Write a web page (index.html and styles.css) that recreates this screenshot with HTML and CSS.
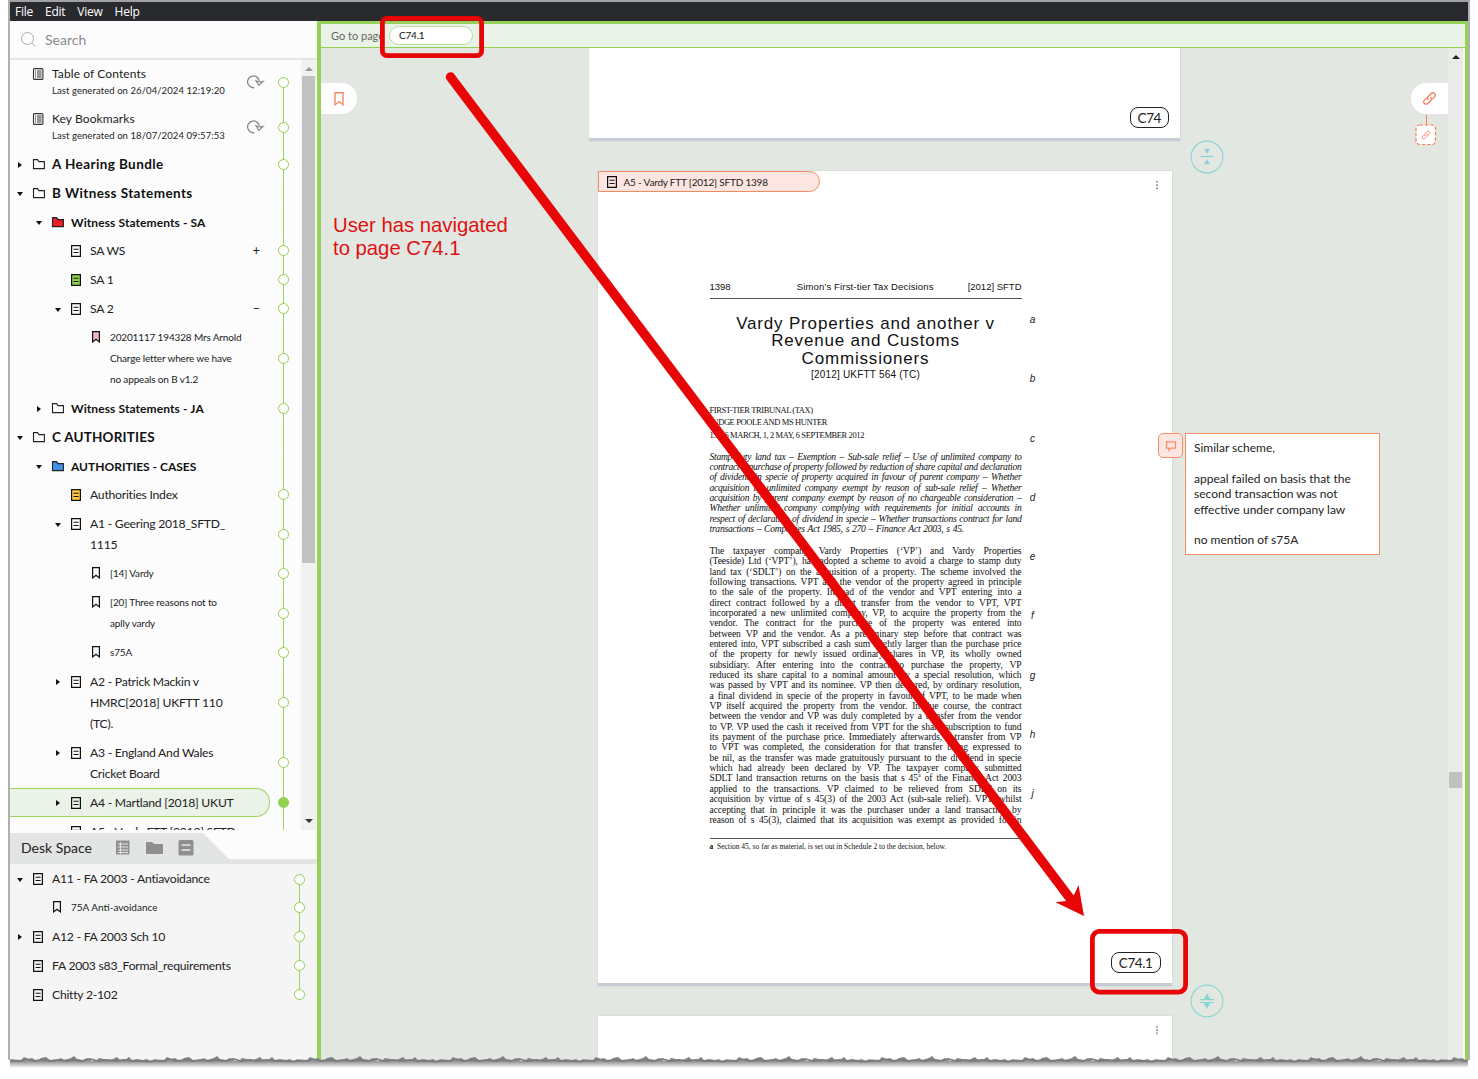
FILE: index.html
```html
<!DOCTYPE html>
<html lang="en">
<head>
  <meta charset="UTF-8">
  <meta name="viewport" content="width=device-width, initial-scale=1.0">
  <title>Hearing Bundle</title>
  <link rel="stylesheet" href="styles.css">
</head>
<body>
  <!-- Icon set -->
  <svg class="defs" width="0" height="0">
    <symbol id="doc" viewBox="0 0 12 14"><path d="M1.6 1.6h8.8v10.8H1.6z" fill="var(--fill, none)" stroke="#111" stroke-width="1.2"/><path d="M3.6 5.2h5M3.6 8.5h5" stroke="#111" stroke-width="1.1"/></symbol>
    <symbol id="list" viewBox="0 0 12 14"><rect x="1.5" y="1.6" width="9.4" height="10.8" rx="1" fill="none" stroke="#333" stroke-width="1.1"/><path d="M3 4h1M3 6h1M3 8h1M3 10h1M5 4h4.6M5 6h4.6M5 8h4.6M5 10h4.6" stroke="#333"/></symbol>
    <symbol id="folder" viewBox="0 0 14 12"><path d="M1.5 1.6h4l1.5 2h5.4v7H1.5z" fill="var(--fill, none)" stroke="var(--line, #222)" stroke-width="1.1"/></symbol>
    <symbol id="mark" viewBox="0 0 10 12"><path d="M1.6.7h6.8v10.2L5 8.2l-3.400 2.7z" fill="var(--fill, none)" stroke="var(--line, #111)" stroke-width="1.2"/></symbol>
    <symbol id="refresh" viewBox="0 0 20 16"><path d="M9.3 13.7A5.9 5.9 0 1 1 14.3 7" fill="none" stroke="#888" stroke-width="1.3"/><path d="M11 6.8l3 1.2 4.2-.7-4.3 4.2z" fill="none" stroke="#888" stroke-width="1.1"/></symbol>
    <symbol id="link" viewBox="0 0 16 16"><g fill="none" stroke="#f58060" stroke-width="1.4" stroke-linecap="round"><path d="M6.4 9.3a2.6 2.6 0 0 1 .2-3.4l3.2-3.2a2.5 2.5 0 0 1 3.6 3.6l-2 2"/><path d="M9.6 6.7a2.6 2.6 0 0 1-.2 3.4l-3.2 3.2a2.5 2.5 0 0 1-3.6-3.6l2-2"/></g></symbol>
    <symbol id="dots" viewBox="0 0 4 10"><path d="M1 1h2v1.6H1zM1 4.3h2v1.6H1zM1 7.6h2v1.6H1z" fill="#999"/></symbol>
  </svg>

  <div class="window">
    <div class="menubar">
      <span>File</span><span>Edit</span><span>View</span><span>Help</span>
    </div>

    <div class="main">
      <div class="sidebar">
        <div class="search">
          <svg width="18" height="18" viewBox="0 0 18 18"><circle cx="7.5" cy="7.5" r="6" fill="none" stroke="#aaa"/><path d="M12 12l3.5 3.5" stroke="#aaa"/></svg>
          <span>Search</span>
        </div>

        <div class="tree-wrap">
          <div class="tree">
            <div class="row report first">
              <div class="label"><i class="arrow"></i><svg class="icon"><use href="#list"/></svg><div class="text">Table of Contents<small>Last generated on 26/04/2024 12:19:20</small></div></div>
              <svg class="refresh"><use href="#refresh"/></svg>
              <div class="rail"><b class="dot"></b></div>
            </div>
            <div class="row report">
              <div class="label"><i class="arrow"></i><svg class="icon"><use href="#list"/></svg><div class="text">Key Bookmarks<small>Last generated on 18/07/2024 09:57:53</small></div></div>
              <svg class="refresh"><use href="#refresh"/></svg>
              <div class="rail"><b class="dot"></b></div>
            </div>
            <div class="row top">
              <div class="label"><i class="arrow right"></i><svg class="icon folder"><use href="#folder"/></svg><div class="text">A Hearing Bundle</div></div>
              <div class="rail"><b class="dot"></b></div>
            </div>
            <div class="row top">
              <div class="label"><i class="arrow down"></i><svg class="icon folder"><use href="#folder"/></svg><div class="text">B Witness Statements</div></div>
              <div class="rail"></div>
            </div>
            <div class="row sub">
              <div class="label"><i class="arrow down"></i><svg class="icon folder red"><use href="#folder"/></svg><div class="text">Witness Statements - SA</div></div>
              <div class="rail"></div>
            </div>
            <div class="row file">
              <div class="label"><i class="arrow"></i><svg class="icon"><use href="#doc"/></svg><div class="text">SA WS</div><span class="sign">+</span></div>
              <div class="rail"><b class="dot"></b></div>
            </div>
            <div class="row file">
              <div class="label"><i class="arrow"></i><svg class="icon green"><use href="#doc"/></svg><div class="text">SA 1</div></div>
              <div class="rail"><b class="dot"></b></div>
            </div>
            <div class="row file">
              <div class="label"><i class="arrow down"></i><svg class="icon"><use href="#doc"/></svg><div class="text">SA 2</div><span class="sign">–</span></div>
              <div class="rail"><b class="dot"></b></div>
            </div>
            <div class="row mark">
              <div class="label"><i class="arrow"></i><svg class="icon pink"><use href="#mark"/></svg><div class="text">20201117 194328 Mrs Arnold<br>Charge letter where we have<br>no appeals on B v1.2</div></div>
              <div class="rail"><b class="dot"></b></div>
            </div>
            <div class="row sub">
              <div class="label"><i class="arrow right"></i><svg class="icon folder"><use href="#folder"/></svg><div class="text">Witness Statements - JA</div></div>
              <div class="rail"><b class="dot"></b></div>
            </div>
            <div class="row top">
              <div class="label"><i class="arrow down"></i><svg class="icon folder"><use href="#folder"/></svg><div class="text caps">C AUTHORITIES</div></div>
              <div class="rail"></div>
            </div>
            <div class="row sub">
              <div class="label"><i class="arrow down"></i><svg class="icon folder blue"><use href="#folder"/></svg><div class="text caps">AUTHORITIES - CASES</div></div>
              <div class="rail"></div>
            </div>
            <div class="row file">
              <div class="label"><i class="arrow"></i><svg class="icon orange"><use href="#doc"/></svg><div class="text">Authorities Index</div></div>
              <div class="rail"><b class="dot"></b></div>
            </div>
            <div class="row file">
              <div class="label"><i class="arrow down"></i><svg class="icon"><use href="#doc"/></svg><div class="text">A1 - Geering 2018_SFTD_<br>1115</div></div>
              <div class="rail"><b class="dot"></b></div>
            </div>
            <div class="row mark">
              <div class="label"><i class="arrow"></i><svg class="icon"><use href="#mark"/></svg><div class="text">[14] Vardy</div></div>
              <div class="rail"><b class="dot"></b></div>
            </div>
            <div class="row mark">
              <div class="label"><i class="arrow"></i><svg class="icon"><use href="#mark"/></svg><div class="text">[20] Three reasons not to<br>aplly vardy</div></div>
              <div class="rail"><b class="dot"></b></div>
            </div>
            <div class="row mark">
              <div class="label"><i class="arrow"></i><svg class="icon"><use href="#mark"/></svg><div class="text">s75A</div></div>
              <div class="rail"><b class="dot"></b></div>
            </div>
            <div class="row file">
              <div class="label"><i class="arrow right"></i><svg class="icon"><use href="#doc"/></svg><div class="text">A2 - Patrick Mackin v<br>HMRC[2018] UKFTT 110<br>(TC).</div></div>
              <div class="rail"><b class="dot"></b></div>
            </div>
            <div class="row file">
              <div class="label"><i class="arrow right"></i><svg class="icon"><use href="#doc"/></svg><div class="text">A3 - England And Wales<br>Cricket Board</div></div>
              <div class="rail"><b class="dot"></b></div>
            </div>
            <div class="row file selected">
              <div class="label"><i class="arrow right"></i><svg class="icon"><use href="#doc"/></svg><div class="text">A4 - Martland [2018] UKUT</div></div>
              <div class="rail"><b class="dot"></b></div>
            </div>
            <div class="row file">
              <div class="label"><i class="arrow"></i><svg class="icon"><use href="#doc"/></svg><div class="text">A5 - Vardy FTT [2012] SFTD</div></div>
              <div class="rail"></div>
            </div>
          </div>
          <div class="scrollbar">
            <i class="tri up"></i>
            <div class="thumb"></div>
            <i class="tri down"></i>
          </div>
        </div>

        <div class="desk-head">
          <span>Desk Space</span>
          <svg width="80" height="18" viewBox="0 0 80 18">
            <path d="M2 1.5h13.5v14H2z" fill="#8f8f8f"/><path d="M4 5h2M4 8h2M4 11h2M4 13.5h2M7 5h7M7 8h7M7 11h7M7 13.5h7M6.5 3v12" stroke="#e3e5e4"/>
            <path d="M32 3h6l2 2h9v10H32z" fill="#8f8f8f"/>
            <rect x="64.5" y="1" width="15" height="15.5" rx="1.5" fill="#8f8f8f"/><path d="M67.5 6h9M67.5 11h9" stroke="#e3e5e4" stroke-width="1.3"/>
          </svg>
        </div>
        <div class="desk">
          <div class="row desk-row first">
            <div class="label"><i class="arrow down"></i><svg class="icon"><use href="#doc"/></svg><div class="text">A11 - FA 2003 - Antiavoidance</div></div>
            <div class="rail"><b class="dot"></b></div>
          </div>
          <div class="row desk-mark">
            <div class="label"><i class="arrow"></i><svg class="icon"><use href="#mark"/></svg><div class="text">75A Anti-avoidance</div></div>
            <div class="rail"><b class="dot"></b></div>
          </div>
          <div class="row desk-row">
            <div class="label"><i class="arrow right"></i><svg class="icon"><use href="#doc"/></svg><div class="text">A12 - FA 2003 Sch 10</div></div>
            <div class="rail"><b class="dot"></b></div>
          </div>
          <div class="row desk-row">
            <div class="label"><i class="arrow"></i><svg class="icon"><use href="#doc"/></svg><div class="text">FA 2003 s83_Formal_requirements</div></div>
            <div class="rail"><b class="dot"></b></div>
          </div>
          <div class="row desk-row last">
            <div class="label"><i class="arrow"></i><svg class="icon"><use href="#doc"/></svg><div class="text">Chitty 2-102</div></div>
            <div class="rail"><b class="dot"></b></div>
          </div>
        </div>
      </div>

      <div class="viewer">
        <div class="goto">
          <span>Go to page</span>
          <div class="goto-input">C74.1</div>
        </div>
        <div class="canvas">
          <div class="pages">
            <div class="page prev">
              <span class="page-no">C74</span>
            </div>
            <div class="page current">
              <div class="page-top">
                <div class="doc-tab"><svg class="icon"><use href="#doc"/></svg>A5 - Vardy FTT [2012] SFTD 1398</div>
                <svg class="dots"><use href="#dots"/></svg>
              </div>
              <div class="sheet">
                <div class="report-text">
                  <div class="running"><span>1398</span><span class="series">Simon’s First-tier Tax Decisions</span><span>[2012] SFTD</span></div>
                  <h1>Vardy Properties and another v<br>Revenue and Customs<br>Commissioners</h1>
                  <div class="cite">[2012] UKFTT 564 (TC)</div>
                  <div class="court">
                    <div>FIRST-TIER TRIBUNAL (TAX)</div>
                    <div>JUDGE POOLE AND MS HUNTER</div>
                    <div>15, 16 MARCH, 1, 2 MAY, 6 SEPTEMBER 2012</div>
                  </div>
                  <div class="para headnote">
                    <div>Stamp duty land tax – Exemption – Sub-sale relief – Use of unlimited company to</div>
                    <div>contract – purchase of property followed by reduction of share capital and declaration</div>
                    <div>of dividend in specie of property acquired in favour of parent company – Whether</div>
                    <div>acquisition by unlimited company exempt by reason of sub-sale relief – Whether</div>
                    <div>acquisition by parent company exempt by reason of no chargeable consideration –</div>
                    <div>Whether unlimited company complying with requirements for initial accounts in</div>
                    <div>respect of declaration of dividend in specie – Whether transactions contract for land</div>
                    <div class="end">transactions – Companies Act 1985, s 270 – Finance Act 2003, s 45.</div>
                  </div>
                  <div class="para">
                    <div>The taxpayer company, Vardy Properties (‘VP’) and Vardy Properties</div>
                    <div>(Teeside) Ltd (‘VPT’), had adopted a scheme to avoid a charge to stamp duty</div>
                    <div>land tax (‘SDLT’) on the acquisition of a property. The scheme involved the</div>
                    <div>following transactions. VPT and the vendor of the property agreed in principle</div>
                    <div>to the sale of the property. Instead of the vendor and VPT entering into a</div>
                    <div>direct contract followed by a direct transfer from the vendor to VPT, VPT</div>
                    <div>incorporated a new unlimited company, VP, to acquire the property from the</div>
                    <div>vendor. The contract for the purchase of the property was entered into</div>
                    <div>between VP and the vendor. As a preliminary step before that contract was</div>
                    <div>entered into, VPT subscribed a cash sum slightly larger than the purchase price</div>
                    <div>of the property for newly issued ordinary shares in VP, its wholly owned</div>
                    <div>subsidiary. After entering into the contract to purchase the property, VP</div>
                    <div>reduced its share capital to a nominal amount by a special resolution, which</div>
                    <div>was passed by VPT and its nominee. VP then declared, by ordinary resolution,</div>
                    <div>a final dividend in specie of the property in favour of VPT, to be made when</div>
                    <div>VP itself acquired the property from the vendor. In due course, the contract</div>
                    <div>between the vendor and VP was duly completed by a transfer from the vendor</div>
                    <div>to VP. VP used the cash it received from VPT for the share subscription to fund</div>
                    <div>its payment of the purchase price. Immediately afterwards, a transfer from VP</div>
                    <div>to VPT was completed, the consideration for that transfer being expressed to</div>
                    <div>be nil, as the transfer was made gratuitously pursuant to the dividend in specie</div>
                    <div>which had already been declared by VP. The taxpayer company submitted</div>
                    <div>SDLT land transaction returns on the basis that s 45<sup>a</sup> of the Finance Act 2003</div>
                    <div>applied to the transactions. VP claimed to be relieved from SDLT on its</div>
                    <div>acquisition by virtue of s 45(3) of the 2003 Act (sub-sale relief). VPT, whilst</div>
                    <div>accepting that in principle it was the purchaser under a land transaction by</div>
                    <div>reason of s 45(3), claimed that its acquisition was exempt as provided for in</div>
                  </div>
                  <div class="footnote"><b>a</b>&nbsp; Section 45, so far as material, is set out in Schedule 2 to the decision, below.</div>
                </div>
                <div class="letters"><span>a</span><span>b</span><span>c</span><span>d</span><span>e</span><span>f</span><span>g</span><span>h</span><span>j</span></div>
              </div>
              <span class="page-no">C74.1</span>
            </div>
            <div class="page next">
              <svg class="dots"><use href="#dots"/></svg>
            </div>
          </div>
          <div class="canvas-scroll">
            <i class="tri up"></i>
            <div class="thumb"></div>
          </div>
        </div>
      </div>
    </div>
  </div>

  <!-- Floating controls over the pages -->
  <div class="float bookmark-tab"><svg><use href="#mark"/></svg></div>
  <div class="float link-tab"><svg><use href="#link"/></svg></div>
  <div class="float link-stem"></div>
  <div class="float link-small"><svg width="22" height="22"><rect x="1" y="1" width="19.5" height="19.5" rx="3.5" fill="#fff" stroke="#f58060" stroke-width="1.2" stroke-dasharray="3.5 1.8"/></svg><svg class="chain"><use href="#link"/></svg></div>
  <svg class="float fold fold-top" viewBox="0 0 34 34"><circle cx="17" cy="17" r="15.9" fill="none" stroke="#8fd3d6" stroke-width="1.1"/><path d="M10.5 16.5h13" stroke="#8fd0dc" stroke-width="1.3"/><path d="M14 8.8h6l-3 5zM14 24.2h6l-3-5z" fill="#8fd0dc"/></svg>
  <svg class="float fold fold-bottom" viewBox="0 0 34 34"><circle cx="17" cy="17" r="15.9" fill="none" stroke="#8ad8d0" stroke-width="1.1"/><path d="M10 15.7h14M10 18.5h14" stroke="#84d6ce" stroke-width="1.2"/><path d="M13.5 15.5h7l-3.5-6zM13.5 18.7h7l-3.5 6z" fill="#84d6ce"/></svg>

  <div class="float comment-icon"><svg width="12" height="12" viewBox="0 0 12 12"><path d="M1.5 1.8h9v6.4H5.6L4 10.2V8.2H1.5z" fill="none" stroke="#fb8d67" stroke-width="1.3"/></svg></div>
  <div class="float comment">
    Similar scheme,<br><br>appeal failed on basis that the<br>second transaction was not<br>effective under company law<br><br>no mention of s75A
  </div>

  <div class="float callout">User has navigated<br>to page C74.1</div>
  <svg class="float markup" width="1478" height="1079">
    <g fill="none" stroke="#e80505" stroke-width="4.8">
      <rect x="382.4" y="18.4" width="99.2" height="37.2" rx="4.5"/>
      <rect x="1092.4" y="931.4" width="93.2" height="60.7" rx="7"/>
      <path d="M450.5 77L1069 897" stroke-width="9.5" stroke-linecap="round"/>
    </g>
    <path d="M1084 916L1055.5 902.3L1066 901L1074.5 894L1078.5 885z" fill="#e80505"/>
  </svg>

  <!-- Torn paper edge -->
  <svg class="float torn" width="1478" height="22">
    <defs>
      <linearGradient id="shade" gradientUnits="userSpaceOnUse" x1="0" y1="6" x2="0" y2="15"><stop offset="0" stop-color="#808080"/><stop offset=".4" stop-color="#a5a5a5"/><stop offset="1" stop-color="#fff"/></linearGradient>
      <pattern id="tear" width="143" height="22" patternUnits="userSpaceOnUse">
        <path d="M0 7l4-1 3 2 5-2 3 2 6-1 3-3 4 2 4-1 5 3 4-3 5-1 4 3 6 0 5-2 3 2 7-2 3-2 3 3 6 1 4-2 5 3 4 0 3-3 5 1 4 2 5-2 4-2 3 3 5 0 4-3 3 3 5-1 6 1V22H0z" fill="url(#shade)"/>
        <path d="M0 8l8 .5 6-1 8 .5 4-2 8 2 9-1 7 1 8-1 9 1 6-1 9 1 8-2 8 2 9-1 8 1 9-1 8 1 11 0" fill="none" stroke="#7c7c7c" stroke-width="1.8"/>
      </pattern>
    </defs>
    <rect x="10" y="0" width="1458" height="22" fill="url(#tear)"/>
    <path d="M0 15h1478v7H0z" fill="#fff"/>
  </svg>
</body>
</html>
```
FILE: styles.css
```css
body {
  margin: 0;
  background-color: #fff;
  font-family: Lato, "Open Sans", sans-serif;
  color: #222;
  overflow: hidden;
}

svg {
  display: block;
}

.window {
  width: 1458px;
  height: 1058px;
  margin-left: 8px;
  border: 2px solid #b0b0b0;
  border-top-color: #a0a2a3;
  border-bottom: none;
  overflow: hidden;
}

.menubar {
  display: flex;
  height: 19px;
  padding-left: 5px;
  background-color: #292a2e;
  color: #fff;
  font: 12px/19px "Open Sans", sans-serif;
  letter-spacing: -0.25px;
}

.menubar span {
  margin-right: 12px;
}

.main {
  display: flex;
  height: 1039px;
}

/* Sidebar */
.sidebar {
  width: 307px;
  background-color: #fcfcfc;
  display: flex;
  flex-direction: column;
}

.search {
  display: flex;
  align-items: center;
  gap: 7px;
  height: 37px;
  padding-left: 10px;
  border-bottom: 2px solid #e6e6e6;
  color: #8a8a8a;
  font-size: 14px;
}

.tree-wrap {
  display: flex;
  height: 770px;
  overflow: hidden;
}

.tree {
  width: 291px;
}

.row {
  display: flex;
}

.label {
  flex: 1;
  display: flex;
  padding: 3.9px 0 3.9px 4px;
  line-height: 21.07px;
  white-space: nowrap;
}

.arrow {
  width: 12px;
  height: 21px;
  margin-right: 6px;
  display: flex;
  align-items: center;
  justify-content: center;
}

.arrow::before {
  content: "";
}

.arrow.right::before {
  border: 3.5px solid transparent;
  border-left: 4px solid #111;
  border-right: none;
  margin-top: 1px;
}

.arrow.down::before {
  border: 3.5px solid transparent;
  border-top: 4px solid #111;
  border-bottom: none;
  margin-top: 2px;
}

.icon {
  flex: none;
  width: 12px;
  height: 14px;
  margin: 4px 8px 0 0;
}

.icon.folder {
  width: 14px;
  height: 12px;
  margin: 4px 6px 0 0;
}

.red { --fill: #ed1c24; }
.green { --fill: #92d050; }
.pink { --fill: #f7b6c0; }
.blue { --fill: #3d8fe8; }
.orange { --fill: #ffc83d; }

.report .label {
  height: 45px;
  padding: 0 0 0 4px;
}

.report .icon {
  margin-top: 7px;
}

.report .text {
  padding-top: 6px;
  font-size: 12px;
  line-height: 16px;
  letter-spacing: 0.1px;
}

.report small {
  display: block;
  font-size: 9.5px;
  line-height: 17px;
  letter-spacing: 0.08px;
}

.refresh {
  width: 20px;
  height: 16px;
  margin: 14px 1px 0 -2px;
}

.top .text {
  font-size: 13.5px;
  font-weight: bold;
  letter-spacing: 0.4px;
  color: #111;
}

.top .caps {
  letter-spacing: 0.2px;
}

.sub .label {
  padding-left: 23px;
}

.sub .text {
  font-size: 12px;
  font-weight: bold;
  letter-spacing: 0.1px;
  color: #111;
}

.sub .caps {
  letter-spacing: 0;
}

.file .label {
  padding-left: 42px;
}

.file .text,
.desk-row .text {
  font-size: 12.2px;
  letter-spacing: -0.25px;
}

.mark .label {
  padding-left: 62px;
}

.mark .text {
  font-size: 10px;
  letter-spacing: -0.15px;
}

.desk-mark .text {
  font-size: 10px;
}

.mark .icon,
.desk-mark .icon {
  width: 10px;
  height: 12px;
  margin: 4px 9px 0 1px;
}

.sign {
  margin-left: auto;
  margin-right: 6px;
  font-size: 13px;
}

.selected .label {
  margin-right: -4px;
  padding-top: 2.9px;
  padding-bottom: 2.9px;
  background-color: #ebf3e8;
  border: 1px solid #9bd45f;
  border-left: none;
  border-radius: 0 14px 14px 0;
}

.rail {
  width: 35px;
  display: flex;
  align-items: center;
  justify-content: center;
  background: linear-gradient(#9bd45f, #9bd45f) center / 1px 100% no-repeat;
}

.first .rail {
  background-size: 1px 50%;
  background-position: center bottom;
}

.last .rail {
  background-size: 1px 50%;
  background-position: center top;
}

.dot {
  width: 9px;
  height: 9px;
  border: 1px solid #92d050;
  border-radius: 50%;
  background-color: #fff;
}

.selected .dot {
  background-color: #92d050;
}

.scrollbar {
  display: flex;
  flex-direction: column;
  align-items: center;
  width: 15px;
  background-color: #f1f1f1;
}

.tri {
  border: 4px solid transparent;
}

.tri.up {
  border-top: none;
  border-bottom: 4px solid #777;
}

.tri.down {
  border-bottom: none;
  border-top: 4px solid #333;
}

.scrollbar .up {
  margin: 7px 0 5px;
  border-bottom-color: #999;
}

.scrollbar .thumb {
  width: 13px;
  height: 487px;
  background-color: #c1c1c1;
}

.scrollbar .down {
  margin-top: auto;
  margin-bottom: 7px;
}

.desk-head {
  box-sizing: border-box;
  display: flex;
  align-items: center;
  height: 31px;
  margin-top: 3px;
  padding: 0 0 2px 11px;
  background-color: #e3e5e4;
  clip-path: polygon(0 0, 193px 0, 219px 26px, 307px 26px, 307px 31px, 0 31px);
  font-size: 14px;
}

.desk-head span {
  width: 93px;
}

.desk {
  flex: 1;
  padding-top: 0.6px;
  background-color: #f5f5f5;
}

.desk-mark .label {
  padding-left: 23px;
}

/* Viewer */
.viewer {
  flex: 1;
  display: flex;
  flex-direction: column;
  border: 3px solid #97d15c;
  border-left-width: 4px;
  border-bottom: none;
}

.goto {
  display: flex;
  align-items: center;
  height: 23px;
  padding-left: 10px;
  background-color: #ebf3e8;
  border-bottom: 1px solid #92d050;
  font-size: 11px;
  color: #666;
}

.goto span {
  width: 58px;
}

.goto-input {
  width: 73px;
  height: 17px;
  padding-left: 9px;
  border: 1px solid #b9e097;
  border-radius: 10px;
  background-color: #fff;
  color: #111;
  font-size: 10px;
  line-height: 17px;
  letter-spacing: -0.2px;
}

.canvas {
  flex: 1;
  display: flex;
  background-color: #e2e7e2;
  overflow: hidden;
}

.pages {
  flex: 1;
  display: flex;
  flex-direction: column;
  align-items: center;
  gap: 30px;
}

.page {
  box-sizing: border-box;
  flex: none;
  display: flex;
  flex-direction: column;
  width: 574px;
  background-color: #fff;
  border-bottom: 3px solid #c7ccd4;
  box-shadow: 0 0 0 1px #dadfdb;
}

.page.prev {
  width: 591px;
  height: 93px;
  padding: 59px 11px 0 0;
}

.page.current {
  height: 815px;
}

.page.next {
  height: 100px;
  padding: 9px 13px;
  align-items: flex-end;
}

.page-no {
  align-self: flex-end;
  box-sizing: border-box;
  height: 21px;
  padding: 0 7px;
  border: 1px solid #222;
  border-radius: 8px;
  font-size: 13.5px;
  line-height: 20px;
  letter-spacing: -0.4px;
}

.current .page-no {
  margin: auto 11px 10px 0;
}

.page-top {
  display: flex;
  justify-content: space-between;
}

.page-top .dots {
  margin: 9px 13px 0 0;
}

.dots {
  width: 4px;
  height: 10px;
}

.doc-tab {
  box-sizing: border-box;
  display: flex;
  align-items: center;
  width: 222px;
  height: 21px;
  padding-left: 7px;
  border: 1px solid #f58a62;
  border-radius: 0 11px 11px 0;
  background-color: #fde5e1;
  font-size: 10px;
  letter-spacing: -0.2px;
}

.doc-tab .icon {
  margin: 0 6px 0 0;
}

/* Law report sheet */
.sheet {
  display: flex;
  padding: 87px 0 0 112px;
}

.report-text {
  width: 312px;
  color: #111;
  font-family: "Liberation Serif", serif;
}

.running {
  display: flex;
  justify-content: space-between;
  height: 19px;
  border-bottom: 1px solid #555;
  font: 9.5px/15px "Liberation Sans", sans-serif;
}

.series {
  margin-left: 32px;
  letter-spacing: 0.15px;
}

h1 {
  margin: 16px 0 0;
  font: 17px/17.3px "Liberation Sans", sans-serif;
  letter-spacing: 0.82px;
  text-align: center;
}

.cite {
  font: 10px/15px "Liberation Sans", sans-serif;
  letter-spacing: 0.2px;
  text-align: center;
}

.court {
  margin: 22px 0 10px;
  font-size: 8.5px;
  line-height: 12.6px;
  letter-spacing: -0.4px;
  white-space: nowrap;
}

.para {
  margin-bottom: 12px;
  font-size: 9.6px;
  line-height: 10.35px;
  letter-spacing: -0.1px;
}

.para div {
  height: 10.35px;
  white-space: nowrap;
  text-align: justify;
  text-align-last: justify;
}

.para .end {
  text-align-last: left;
  word-spacing: 0.8px;
}

.para sup {
  font-size: 6px;
  line-height: 0;
}

.headnote {
  margin-bottom: 11.5px;
  font-style: italic;
  letter-spacing: -0.27px;
}

.footnote {
  margin-top: 13px;
  padding-top: 2px;
  border-top: 1px solid #555;
  font-size: 7.5px;
  line-height: 12px;
}

.letters {
  display: flex;
  flex-direction: column;
  width: 22px;
  margin-top: 11px;
  text-align: center;
  font: italic 10px/59.3px "Liberation Sans", sans-serif;
}

.canvas-scroll {
  display: flex;
  flex-direction: column;
  align-items: center;
  width: 15px;
  border-right: 2px solid #f7f7f7;
  background-color: #ebebeb;
}

.canvas-scroll .up {
  margin-top: 7px;
  border-bottom-color: #222;
}

.canvas-scroll .thumb {
  width: 13px;
  height: 16px;
  margin-top: 713px;
  background-color: #c1c1c1;
}

/* Overlays */
.float {
  position: absolute;
}

.bookmark-tab {
  left: 321px;
  top: 83px;
  width: 36px;
  height: 31px;
  border-radius: 0 16px 16px 0;
  background-color: #fff;
  --line: #f58a62;
}

.bookmark-tab svg {
  width: 12px;
  height: 14px;
  padding: 9px 0 0 12px;
}

.link-tab {
  left: 1411px;
  top: 83px;
  width: 37px;
  height: 31px;
  border-radius: 16px 0 0 16px;
  background-color: #fff;
}

.link-tab svg {
  width: 15px;
  height: 15px;
  padding: 8px 0 0 11px;
}

.link-stem {
  left: 1426px;
  top: 115px;
  width: 1px;
  height: 10px;
  background-color: #f58060;
}

.link-small {
  left: 1415px;
  top: 124px;
  width: 22px;
  height: 22px;
}

.link-small .chain {
  position: absolute;
  left: 6px;
  top: 6px;
  width: 10px;
  height: 10px;
}

.fold {
  left: 1189.5px;
  width: 34px;
  height: 34px;
}

.fold-top {
  top: 139.5px;
}

.fold-bottom {
  top: 984px;
}

.comment-icon {
  box-sizing: border-box;
  left: 1158px;
  top: 433px;
  width: 25px;
  height: 25px;
  padding: 6px 0 0 6px;
  border: 1px solid #fb8d67;
  border-radius: 5px;
  background-color: #fde5e1;
}

.comment {
  box-sizing: border-box;
  left: 1185px;
  top: 433px;
  width: 195px;
  height: 122px;
  padding: 6px 8px;
  border: 1px solid #fb8d67;
  background-color: #fff;
  font-size: 12px;
  line-height: 15.4px;
  white-space: nowrap;
}

.callout {
  left: 333px;
  top: 214px;
  color: #e01010;
  font: 20.3px/23px "Liberation Sans", sans-serif;
}

.markup {
  left: 0;
  top: 0;
}

.torn {
  left: 0;
  top: 1053px;
}
```
